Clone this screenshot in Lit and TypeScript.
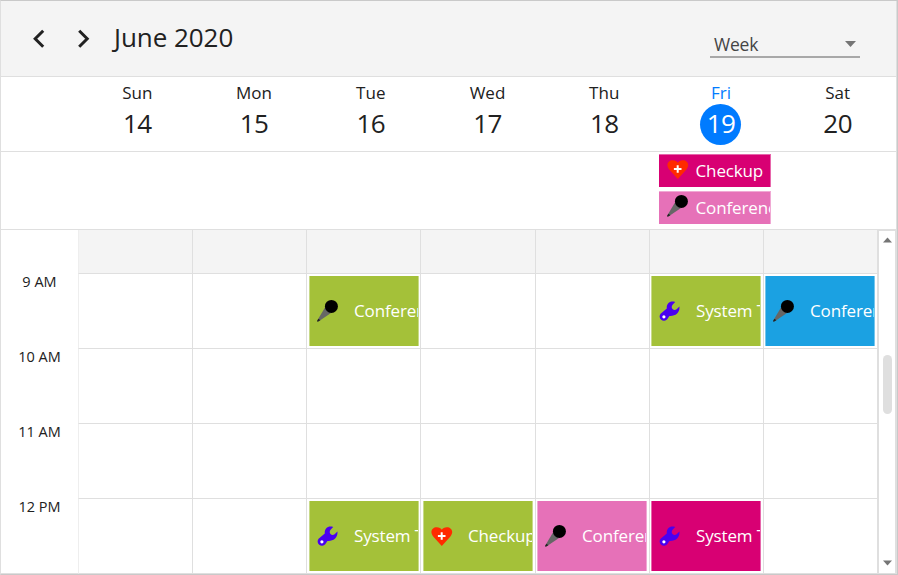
import { LitElement, html, css, svg } from "lit";
import { customElement, property } from "lit/decorators.js";
import { classMap } from "lit/directives/class-map.js";

type IconName = "mic" | "wrench" | "heart";
type Tone = "green" | "blue" | "pink" | "magenta";

interface Appointment {
  title: string;
  icon: IconName;
  tone: Tone;
}

const DAYS = [
  ["Sun", 14], ["Mon", 15], ["Tue", 16], ["Wed", 17], ["Thu", 18], ["Fri", 19], ["Sat", 20],
] as const;

const conference = (tone: Tone): Appointment => ({ title: "Conference", icon: "mic", tone });
const system = (tone: Tone): Appointment => ({ title: "System Troubleshoot", icon: "wrench", tone });
const checkup = (tone: Tone): Appointment => ({ title: "Checkup", icon: "heart", tone });

const ALL_DAY: Appointment[] = [checkup("magenta"), conference("pink")];

const HOURS: { label: string; slots: (Appointment | null)[] }[] = [
  { label: "9 AM", slots: [null, null, conference("green"), null, null, system("green"), conference("blue")] },
  { label: "10 AM", slots: Array(7).fill(null) },
  { label: "11 AM", slots: Array(7).fill(null) },
  { label: "12 PM", slots: [null, null, system("green"), checkup("green"), conference("pink"), system("magenta"), null] },
];

const ICONS = {
  mic: svg`
    <path d="M8 8.4 L.4 21.2 L1.4 22.4 L14 14 Z" fill="#666"/>
    <path d="M1.4 19.8 L0 22 Q.2 23 1.2 22.6 L3.4 21.2 Z" fill="#222"/>
    <circle cx="14.4" cy="7.4" r="6.5" fill="#000"/>`,
  wrench: svg`
    <path d="M16.2 3 C10.6 1.2 7.2 5 7.8 9.6 L1.6 14.8 A4.2 4.2 0 1 0 8.2 20.2 L10.4 16.9 C16.6 17.4 21.2 13.4 20.4 7.4 L17.6 10.2 Q15.4 11.8 13.5 10 Q11.8 7.8 13.8 5.4 Z" fill="#4a00f0"/>
    <circle cx="4.9" cy="17.8" r="1.6" fill="#fff"/>`,
  heart: svg`
    <path d="M10.8 22 L2.2 12.4 C-1.6 7.8 1.2 3.2 5.7 3.2 C8.2 3.2 9.9 4.3 10.8 5.7 C11.7 4.3 13.4 3.2 15.9 3.2 C20.4 3.2 23.2 7.8 19.4 12.4 Z" fill="#ff2a00"/>
    <path d="M10.7 8.2 V15.8 M6.9 12 H14.5" stroke="#fff" stroke-width="2" fill="none"/>`,
};

@customElement("calendar-event")
class CalendarEvent extends LitElement {
  @property({ attribute: false }) item!: Appointment;
  @property({ type: Boolean, reflect: true }) compact = false;

  static styles = css`
    :host { display: block; width: 110px; height: 70px; }
    :host([compact]) { width: 112px; height: 33px; }
    .event {
      box-sizing: border-box; height: 100%; display: flex; align-items: center;
      overflow: hidden; padding-left: 7px; color: #fff; white-space: nowrap;
      border: solid rgba(255, 255, 255, 0.4); border-width: 0 1px;
      font-size: 17px; letter-spacing: -0.15px;
    }
    .green { background: #a4c139; }
    .blue { background: #1ba1e2; }
    .pink { background: #e671b8; }
    .magenta { background: #d80073; }
    svg { width: 22px; height: 24px; flex: none; }
    .title { margin-left: 15px; line-height: 24px; }
    :host([compact]) .event { border-width: 1px 1px 0 0; padding-left: 8px; }
    :host([compact]) svg { margin-bottom: 4px; }
    :host([compact]) .title { height: 22px; margin: 0 0 2px 7px; overflow: hidden; }
  `;

  render() {
    const { icon, title, tone } = this.item;
    return html`<div class=${classMap({ event: true, [tone]: true })}>
      <svg viewBox="0 0 22 24">${ICONS[icon]}</svg><span class="title">${title}</span>
    </div>`;
  }
}

@customElement("app-root")
class AppRoot extends LitElement {
  static styles = css`
    :host {
      display: block; box-sizing: border-box; width: 898px; height: 575px; overflow: hidden;
      background: #fff; color: #212121;
      font-family: "Open Sans", "Noto Sans", sans-serif;
      border: 1px solid #c9c9c9; border-left-color: #dfdfdf;
    }
    .frame {
      box-sizing: border-box; height: 573px; display: flex; flex-direction: column;
      border: solid #dfdfdf; border-width: 0 1px 1px 0;
    }
    .toolbar {
      box-sizing: border-box; height: 76px; flex: none; display: flex; align-items: center;
      background: #f4f4f4; border-bottom: 1px solid #dfdfdf; padding: 0 36px 0 31px;
    }
    .chevron { width: 14px; height: 20px; }
    .chevron + .chevron { margin-left: 30px; }
    .month { margin: 0 0 4px 24px; font-size: 26px; line-height: 36px; letter-spacing: -0.05px; }
    .view {
      box-sizing: border-box; width: 150px; height: 29px; margin: 10px 0 0 auto;
      display: flex; align-items: center; justify-content: space-between;
      border-bottom: 2px solid #a8a8a8; padding: 2px 4px 0 4px;
      color: #444; font-size: 17.5px; letter-spacing: -0.2px;
    }
    .arrow { width: 11px; height: 6px; }
    .days {
      box-sizing: border-box; height: 75px; flex: none; padding-left: 78px;
      display: grid; grid-template-columns: repeat(7, 1fr); border-bottom: 1px solid #dfdfdf;
    }
    .day { display: flex; flex-direction: column; align-items: center; }
    .name { margin-top: 5px; height: 22px; line-height: 22px; font-size: 17px; }
    .date { width: 41px; height: 41px; line-height: 39px; border-radius: 50%; text-align: center; font-size: 26px; letter-spacing: -0.6px; }
    .today .name { color: #007bff; }
    .today .date { background: #007bff; color: #fff; }
    .all-day {
      box-sizing: border-box; height: 78px; flex: none; padding: 2px 0 0 78px;
      display: grid; grid-template-columns: repeat(7, 1fr); border-bottom: 1px solid #dfdfdf;
    }
    .stack { grid-column: 6; width: 112px; margin-left: -4px; display: flex; flex-direction: column; gap: 4.4px; }
    .body { flex: 1; min-height: 0; display: flex; }
    .hours { width: 77px; flex: none; display: flex; flex-direction: column; padding-top: 43px; }
    .hour { height: 75px; line-height: 17px; text-align: center; font-size: 14.5px; letter-spacing: 0; }
    .grid { width: 800px; flex: none; display: flex; flex-direction: column; }
    .row { height: 75px; flex: none; display: grid; grid-template-columns: 115px 114px 114px 115px 114px 114px 114px; }
    .row.closed { height: 44px; background: #f4f4f4; }
    .cell { box-sizing: border-box; border: solid #dfdfdf; border-width: 0 1px 1px 0; padding: 2px 0 0 2px; min-width: 0; }
    .cell:nth-child(n + 5) { padding-left: 1px; }
    .cell:first-child { border-left: 1px solid #eee; }
    .scroll {
      box-sizing: border-box; flex: 1; display: flex; flex-direction: column; align-items: center;
      border: solid #dfdfdf; border-width: 1px 1px 0 1px; padding-top: 6px;
    }
    .scroll .arrow { width: 9px; height: 6px; }
    .thumb { width: 9px; height: 59px; margin: 112px 0 146px; border-radius: 5px; background: #dfdfdf; }
  `;

  render() {
    return html`<div class="frame">
      <header class="toolbar">
        <svg class="chevron" viewBox="0 0 14 20"><path d="M11.2 1.8 L3.2 9.8 L11.2 17.8" fill="none" stroke="#212121" stroke-width="3"/></svg>
        <svg class="chevron" viewBox="0 0 14 20"><path d="M3.2 1.8 L11.2 9.8 L3.2 17.8" fill="none" stroke="#212121" stroke-width="3"/></svg>
        <span class="month">June 2020</span>
        <div class="view"><span>Week</span>
          <svg class="arrow" viewBox="0 0 11 6"><path d="M0 0 H11 L5.5 6 Z" fill="#757575"/></svg>
        </div>
      </header>
      <div class="days">
        ${DAYS.map(([name, date]) => html`<div class=${classMap({ day: true, today: date === 19 })}>
          <span class="name">${name}</span><span class="date">${date}</span>
        </div>`)}
      </div>
      <div class="all-day">
        <div class="stack">${ALL_DAY.map((item) => html`<calendar-event compact .item=${item}></calendar-event>`)}</div>
      </div>
      <div class="body">
        <div class="hours">${HOURS.map((h) => html`<div class="hour">${h.label}</div>`)}</div>
        <div class="grid">
          <div class="row closed">${DAYS.map(() => html`<div class="cell"></div>`)}</div>
          ${HOURS.map((h) => html`<div class="row">${h.slots.map((item) => html`<div class="cell">
            ${item ? html`<calendar-event .item=${item}></calendar-event>` : null}
          </div>`)}</div>`)}
        </div>
        <div class="scroll">
          <svg class="arrow" viewBox="0 0 9 6"><path d="M0 5.5 L4.5 .5 L9 5.5 Z" fill="#757575"/></svg>
          <div class="thumb"></div>
          <svg class="arrow" viewBox="0 0 9 6"><path d="M0 .5 L4.5 5.5 L9 .5 Z" fill="#757575"/></svg>
        </div>
      </div>
    </div>`;
  }
}
